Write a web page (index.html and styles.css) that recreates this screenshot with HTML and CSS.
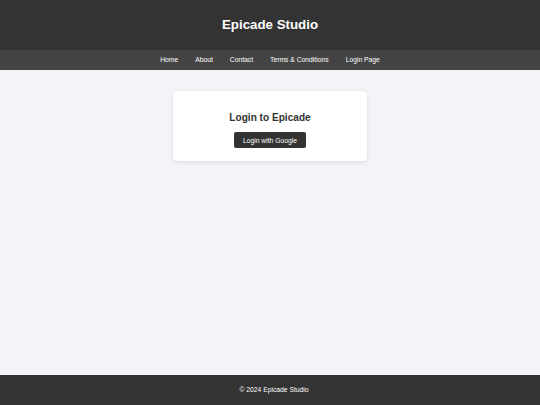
FILE: index.html
```html
<!DOCTYPE html>
<html lang="en">
<head>
<meta charset="utf-8">
<title>Epicade Studio</title>
<link rel="stylesheet" href="styles.css">
</head>
<body>
<header class="site-header">
  <h1 class="site-title">Epicade Studio</h1>
</header>
<nav class="site-nav">
  <a href="#">Home</a>
  <a href="#">About</a>
  <a href="#">Contact</a>
  <a href="#">Terms &amp; Conditions</a>
  <a href="#">Login Page</a>
</nav>
<main class="content">
  <section class="login-card">
    <h2 class="login-title">Login to Epicade</h2>
    <button class="google-btn" type="button">Login with Google</button>
  </section>
</main>
<footer class="site-footer">
  <p>&copy; 2024 Epicade Studio</p>
</footer>
</body>
</html>
```
FILE: styles.css
```css
* { box-sizing: border-box; }
html, body { margin: 0; padding: 0; }
body {
  font-family: "Liberation Sans", Arial, sans-serif;
  background: #f4f4f8;
  color: #333;
  min-height: 100vh;
  display: flex;
  flex-direction: column;
}
.site-header {
  background: #333333;
  height: 50px;
  display: flex;
  align-items: center;
  justify-content: center;
}
.site-title {
  margin: 0;
  color: #fff;
  font-size: 13.3px;
  font-weight: bold;
  line-height: 16px;
}
.site-nav {
  background: #444444;
  height: 20px;
  display: flex;
  align-items: center;
  justify-content: center;
  gap: 17px;
}
.site-nav a {
  color: #fff;
  text-decoration: none;
  font-size: 6.75px;
  line-height: 8px;
}
.content {
  flex: 1;
  display: flex;
  flex-direction: column;
  align-items: center;
  padding-top: 21px;
}
.login-card {
  width: 194px;
  height: 70px;
  background: #fff;
  border-radius: 4px;
  box-shadow: 0 1px 4px rgba(0,0,0,0.1);
  display: flex;
  flex-direction: column;
  align-items: center;
  padding-top: 21px;
}
.login-title {
  margin: 0 0 8px;
  font-size: 10.1px;
  line-height: 12px;
  font-weight: bold;
  color: #333;
}
.google-btn {
  font-family: "Liberation Sans", Arial, sans-serif;
  font-size: 6.75px;
  height: 16px;
  padding: 0 8.5px;
  background: #333;
  color: #fff;
  border: none;
  border-radius: 2px;
}
.site-footer {
  background: #333333;
  height: 30px;
  display: flex;
  align-items: center;
  justify-content: center;
  padding-left: 8px;
}
.site-footer p {
  margin: 0;
  color: #fff;
  font-size: 6.75px;
  line-height: 8px;
}
```
